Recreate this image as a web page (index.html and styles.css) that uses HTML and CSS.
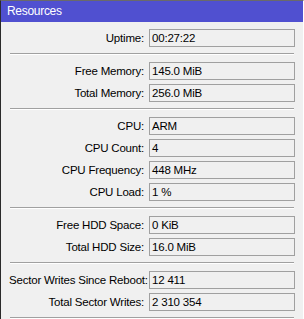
FILE: index.html
```html
<!DOCTYPE html>
<html>
<head>
    <link rel="stylesheet" href="styles.css">
</head>
<body>
    <div class="window">
        <div class="title">Resources</div>
        <div class="content">
            <div class="group">
                <label>Uptime:</label><div class="value">00:27:22</div>
            </div>
            <div class="sep"></div>
            <div class="group">
                <label>Free Memory:</label><div class="value">145.0 MiB</div>
                <label>Total Memory:</label><div class="value">256.0 MiB</div>
            </div>
            <div class="sep"></div>
            <div class="group">
                <label>CPU:</label><div class="value">ARM</div>
                <label>CPU Count:</label><div class="value">4</div>
                <label>CPU Frequency:</label><div class="value">448 MHz</div>
                <label>CPU Load:</label><div class="value">1 %</div>
            </div>
            <div class="sep"></div>
            <div class="group">
                <label>Free HDD Space:</label><div class="value">0 KiB</div>
                <label>Total HDD Size:</label><div class="value">16.0 MiB</div>
            </div>
            <div class="sep"></div>
            <div class="group">
                <label>Sector Writes Since Reboot:</label><div class="value">12 411</div>
                <label>Total Sector Writes:</label><div class="value">2 310 354</div>
            </div>
            <div class="sep"></div>
        </div>
    </div>
</body>
</html>
```

FILE: styles.css
```css
body {
    margin: 0;
    font-family: "Liberation Sans", Arial, sans-serif;
    font-size: 11.5px;
    background: #f0f0f0;
}
.window {
    width: 302px;
    height: 318px;
    border-top: 1px solid #6a6a6a;
    border-left: 1px solid #2a2a2a;
    border-right: 1px solid #ffffff;
    background: #f0f0f0;
    overflow: hidden;
}
.title {
    background: #5050d0;
    color: #ffffff;
    height: 21px;
    line-height: 21px;
    padding-left: 6px;
    font-size: 12px;
    letter-spacing: -0.3px;
}
.content {
    padding: 7px 9px 0 8px;
}
.group {
    display: grid;
    grid-template-columns: 135px 146px;
    column-gap: 5px;
    row-gap: 4px;
    align-items: center;
}
.group label {
    text-align: right;
    white-space: nowrap;
    letter-spacing: -0.2px;
    color: #000000;
}
.value {
    height: 16px;
    line-height: 17px;
    border: 1px solid #a0a0a0;
    padding-left: 2px;
    letter-spacing: -0.2px;
    color: #000000;
}
.sep {
    height: 1px;
    border-bottom: 1px solid #ffffff;
    background: #a0a0a0;
    margin: 6px 0 7px 1px;
}
```
